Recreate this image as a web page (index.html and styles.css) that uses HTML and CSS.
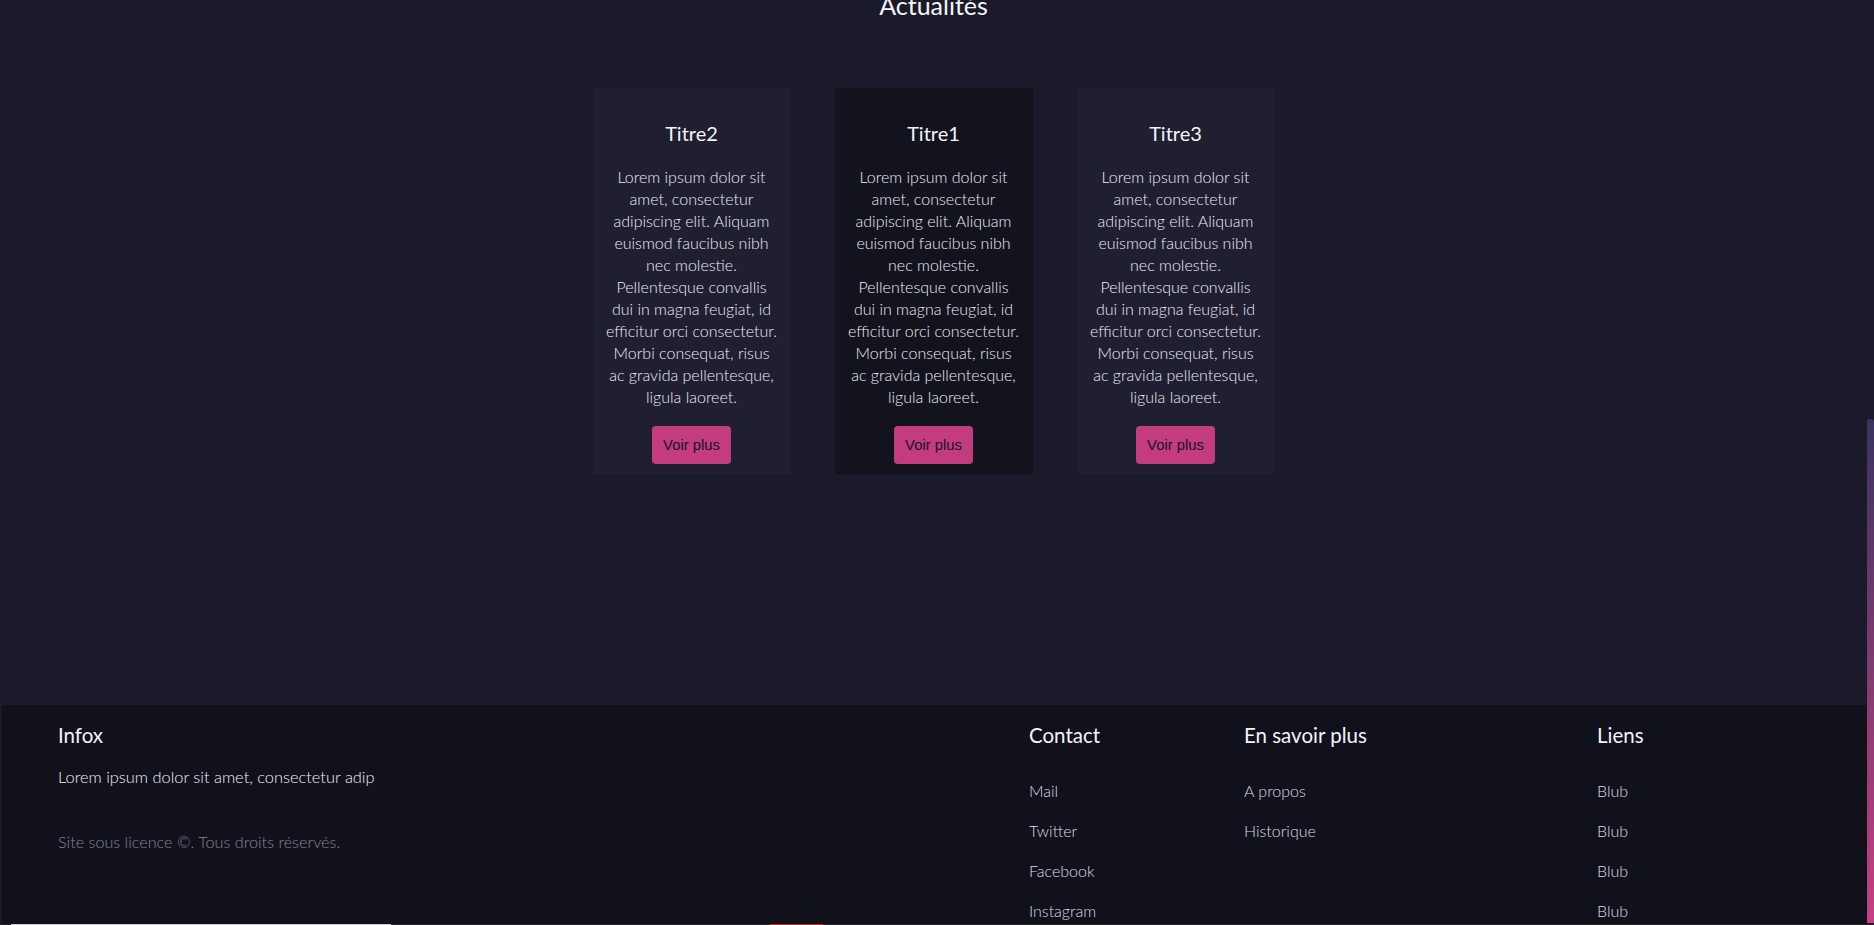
FILE: index.html
```html
<!DOCTYPE html>
<html lang="fr">
<head>
<meta charset="utf-8">
<title>Actualités</title>
<link rel="stylesheet" href="styles.css">
</head>
<body>
<div class="viewport">
  <div class="page">
    <section class="news">
      <h2 class="news-title">Actualités</h2>
      <div class="cards">
        <article class="card">
          <h3 class="card-title">Titre2</h3>
          <p class="card-text">Lorem ipsum dolor sit amet, consectetur adipiscing elit. Aliquam euismod faucibus nibh nec molestie. Pellentesque convallis dui in magna feugiat, id efficitur orci consectetur. Morbi consequat, risus ac gravida pellentesque, ligula laoreet.</p>
          <button class="btn">Voir plus</button>
        </article>
        <article class="card card-dark">
          <h3 class="card-title">Titre1</h3>
          <p class="card-text">Lorem ipsum dolor sit amet, consectetur adipiscing elit. Aliquam euismod faucibus nibh nec molestie. Pellentesque convallis dui in magna feugiat, id efficitur orci consectetur. Morbi consequat, risus ac gravida pellentesque, ligula laoreet.</p>
          <button class="btn">Voir plus</button>
        </article>
        <article class="card">
          <h3 class="card-title">Titre3</h3>
          <p class="card-text">Lorem ipsum dolor sit amet, consectetur adipiscing elit. Aliquam euismod faucibus nibh nec molestie. Pellentesque convallis dui in magna feugiat, id efficitur orci consectetur. Morbi consequat, risus ac gravida pellentesque, ligula laoreet.</p>
          <button class="btn">Voir plus</button>
        </article>
      </div>
    </section>
    <footer class="footer">
      <div class="fcol fcol-info">
        <h4 class="fhead">Infox</h4>
        <p class="finfo">Lorem ipsum dolor sit amet, consectetur adip</p>
        <p class="fcopy">Site sous licence ©. Tous droits réservés.</p>
      </div>
      <div class="fcol">
        <h4 class="fhead">Contact</h4>
        <ul class="flinks">
          <li>Mail</li>
          <li>Twitter</li>
          <li>Facebook</li>
          <li>Instagram</li>
        </ul>
      </div>
      <div class="fcol">
        <h4 class="fhead">En savoir plus</h4>
        <ul class="flinks">
          <li>A propos</li>
          <li>Historique</li>
        </ul>
      </div>
      <div class="fcol">
        <h4 class="fhead">Liens</h4>
        <ul class="flinks">
          <li>Blub</li>
          <li>Blub</li>
          <li>Blub</li>
          <li>Blub</li>
        </ul>
      </div>
    </footer>
  </div>
  <div class="scrolltrack"><div class="thumb"></div></div>
</div>
<div class="bottomline">
  <span class="seg seg-dark1"></span>
  <span class="seg seg-light"></span>
  <span class="seg seg-dark2"></span>
  <span class="seg seg-red"></span>
  <span class="seg seg-dark3"></span>
</div>
</body>
</html>
```
FILE: styles.css
```css
* { box-sizing: border-box; }
html, body {
  margin: 0;
  padding: 0;
  height: 925px;
  overflow: hidden;
  background: #1b1a2a;
  font-family: "Lato", "Noto Sans", sans-serif;
  color: #e4e4ec;
}
.viewport {
  display: flex;
  height: 925px;
  overflow: hidden;
}
.page {
  flex: 1;
  display: flex;
  flex-direction: column;
  min-width: 0;
}
.news {
  flex: 0 0 705px;
  display: flex;
  flex-direction: column;
  align-items: center;
}
.news-title {
  margin: -10px 0 0;
  font-size: 25px;
  line-height: 30px;
  font-weight: 400;
  color: #f4f4f8;
}
.cards {
  margin-top: 68px;
  display: flex;
  gap: 44px;
  align-items: flex-start;
}
.card {
  width: 198px;
  height: 386px;
  background: #1f1f31;
  border-radius: 2px;
  padding: 0 12px 10px;
  display: flex;
  flex-direction: column;
  align-items: center;
}
.card-dark { background: #13131e; }
.card-title {
  margin: 33px 0 0;
  font-size: 20px;
  line-height: 24px;
  font-weight: 400;
  color: #f4f4f8;
}
.card-text {
  margin: 21px 0 0;
  width: 174px;
  font-size: 16px;
  line-height: 22px;
  font-weight: 300;
  text-align: center;
  color: #ececf2;
}
.btn {
  margin-top: 18px;
  height: 38px;
  padding: 0 11px;
  border: none;
  border-radius: 4px;
  background: #c43c80;
  color: #15141f;
  font-family: "Liberation Sans", Arial, sans-serif;
  font-size: 14.8px;
}
.footer {
  flex: 1;
  margin-left: 2px;
  background: #11111b;
  display: grid;
  grid-template-columns: 971px 215px 353px 1fr;
  padding: 17px 0 0 56px;
}
.fhead {
  margin: 0;
  font-size: 20.5px;
  line-height: 26px;
  font-weight: 400;
  color: #f4f4f8;
}
.finfo {
  margin: 18px 0 0;
  font-size: 16.4px;
  line-height: 22px;
  font-weight: 300;
  color: #f0f0f6;
}
.fcopy {
  margin: 43px 0 0;
  font-size: 16.2px;
  line-height: 22px;
  font-weight: 300;
  color: #84849a;
}
.flinks {
  list-style: none;
  margin: 32px 0 0;
  padding: 0;
  display: flex;
  flex-direction: column;
  gap: 18px;
}
.flinks li {
  font-size: 16px;
  line-height: 22px;
  font-weight: 300;
  color: #dcdce6;
}
.scrolltrack {
  flex: 0 0 7px;
  display: flex;
  flex-direction: column;
  justify-content: flex-end;
  padding-bottom: 2px;
}
.thumb {
  height: 504px;
  border-radius: 3px 3px 0 0;
  background: linear-gradient(to bottom, #39335f, #7a3b6e 45%, #c63f84);
}
.bottomline {
  position: fixed;
  left: 0;
  right: 0;
  bottom: 0;
  height: 1px;
  display: flex;
}
.seg { display: block; height: 1px; }
.seg-dark1 { width: 11px; background: #232323; }
.seg-light { width: 380px; background: #c9c9cd; }
.seg-dark2 { width: 379px; background: #262626; }
.seg-red { width: 53px; background: #b3302f; }
.seg-dark3 { flex: 1; background: #262626; }
```
